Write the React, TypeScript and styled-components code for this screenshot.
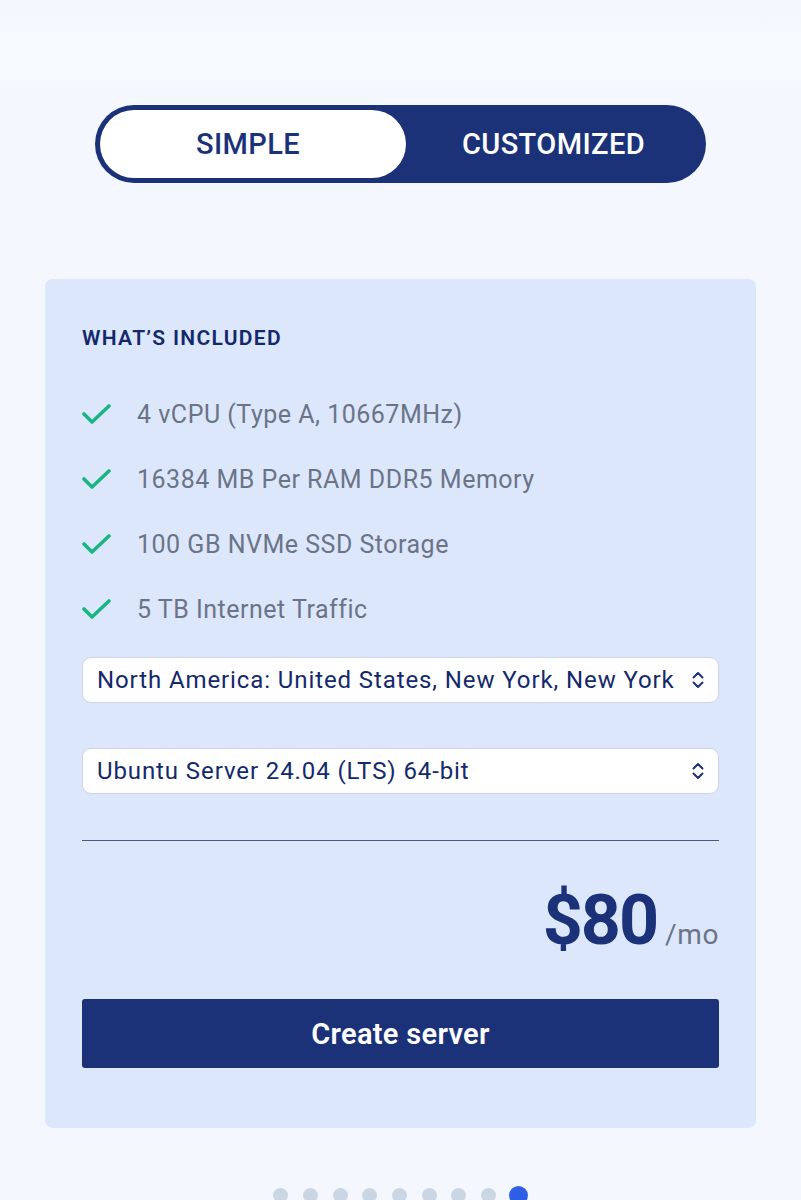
import React from 'react';
import styled, {createGlobalStyle} from 'styled-components';

const Navy = '#1b3279';
const Green = '#1bb583';

const GlobalStyle = createGlobalStyle`
    html, body {
        margin: 0;
        padding: 0;
        background: #f4f8fe;
        font-family: Roboto, 'Liberation Sans', sans-serif;
    }
`;

const features = [
    '4 vCPU (Type A, 10667MHz)',
    '16384 MB Per RAM DDR5 Memory',
    '100 GB NVMe SSD Storage',
    '5 TB Internet Traffic'
];

const Check = () => (
    <svg width='30' height='22' viewBox='0 0 30 22' fill='none'>
        <polyline points='2,11 10,19 27,3' stroke={Green} strokeWidth='3.6' strokeLinecap='round' strokeLinejoin='round' />
    </svg>
);

const UpDown = () => (
    <svg width='14' height='20' viewBox='0 0 14 20' fill='none'>
        <polyline points='2.5,7.5 7,3 11.5,7.5' stroke={Navy} strokeWidth='2' strokeLinecap='round' strokeLinejoin='round' />
        <polyline points='2.5,12.5 7,17 11.5,12.5' stroke={Navy} strokeWidth='2' strokeLinecap='round' strokeLinejoin='round' />
    </svg>
);

const App = () => (
    <Page>
        <GlobalStyle />
        <Toggle>
            <ToggleOption active>SIMPLE</ToggleOption>
            <ToggleOption>CUSTOMIZED</ToggleOption>
        </Toggle>

        <Card>
            <Heading>WHAT’S INCLUDED</Heading>
            <FeatureList>
                {features.map((f) => (
                    <Feature key={f}>
                        <Check />
                        <span>{f}</span>
                    </Feature>
                ))}
            </FeatureList>

            <Select>
                <span>North America: United States, New York, New York</span>
                <UpDown />
            </Select>
            <Select>
                <span>Ubuntu Server 24.04 (LTS) 64-bit</span>
                <UpDown />
            </Select>

            <Divider />

            <Price>
                <Amount>$80</Amount>
                <Period>/mo</Period>
            </Price>

            <CreateButton>Create server</CreateButton>
        </Card>

        <Dots>
            {Array.from({length: 9}).map((_, i) => (
                <Dot key={i} active={i === 8} />
            ))}
        </Dots>
    </Page>
);

export default App;

const Page = styled.main`
    display: flex;
    flex-direction: column;
    align-items: center;
    padding-top: 105px;
    min-height: 1200px;
    box-sizing: border-box;
    background: linear-gradient(#f3f7fd 0, #f7faff 50px, #f4f8fe 100px);
`;

const Toggle = styled.div`
    display: grid;
    grid-template-columns: 306px 1fr;
    width: 611px;
    height: 78px;
    box-sizing: border-box;
    padding: 5px;
    border-radius: 39px;
    background: ${Navy};
`;

const ToggleOption = styled.div<{active?: boolean}>`
    display: flex;
    align-items: center;
    justify-content: center;
    padding-right: ${({active}) => (active ? 10 : 0)}px;
    border-radius: 34px;
    font-size: 29px;
    font-weight: 500;
    letter-spacing: 0.4px;
    color: ${({active}) => (active ? Navy : '#ffffff')};
    background: ${({active}) => (active ? '#ffffff' : 'transparent')};
`;

const Card = styled.section`
    display: flex;
    flex-direction: column;
    width: 711px;
    box-sizing: border-box;
    margin-top: 96px;
    padding: 47px 37px 60px;
    border-radius: 8px;
    background: #dce7fc;
`;

const Heading = styled.h2`
    margin: 0;
    font-size: 21px;
    line-height: 25px;
    font-weight: 600;
    letter-spacing: 1.3px;
    color: #14296b;
`;

const FeatureList = styled.ul`
    display: flex;
    flex-direction: column;
    gap: 37px;
    margin: 0;
    padding: 0;
    margin-top: 49px;
    list-style: none;
`;

const Feature = styled.li`
    display: flex;
    align-items: center;
    gap: 25px;
    height: 28px;
    font-size: 25px;
    letter-spacing: 0.5px;
    color: #6b7487;
`;

const Select = styled.div`
    display: flex;
    align-items: center;
    justify-content: space-between;
    height: 46px;
    box-sizing: border-box;
    margin-top: 34px;
    padding: 0 13px 0 14px;
    border: 1.5px solid #cfd6e3;
    border-radius: 9px;
    background: #ffffff;
    font-size: 24px;
    letter-spacing: 0.9px;
    color: #14296b;

    & + & {
        margin-top: 45px;
    }
`;

const Divider = styled.hr`
    margin: 46px 0 0;
    border: none;
    border-top: 1.5px solid #4a5a82;
`;

const Price = styled.div`
    display: flex;
    align-items: baseline;
    justify-content: flex-end;
    gap: 8px;
    margin-top: 37px;
`;

const Amount = styled.span`
    font-size: 70px;
    line-height: 84px;
    font-weight: 700;
    letter-spacing: -2px;
    color: ${Navy};
`;

const Period = styled.span`
    font-size: 28px;
    letter-spacing: 0.6px;
    color: #6b7487;
`;

const CreateButton = styled.button`
    height: 69px;
    margin-top: 37px;
    border: none;
    border-radius: 3px;
    background: ${Navy};
    color: #ffffff;
    font-family: inherit;
    font-size: 29px;
    font-weight: 600;
    letter-spacing: 0.3px;
`;

const Dots = styled.div`
    display: flex;
    align-items: center;
    gap: 14.7px;
    margin-top: 58px;
`;

const Dot = styled.span<{active?: boolean}>`
    width: ${({active}) => (active ? 19 : 15)}px;
    height: ${({active}) => (active ? 19 : 15)}px;
    margin-left: ${({active}) => (active ? -2 : 0)}px;
    border-radius: 50%;
    background: ${({active}) => (active ? '#2d5fe6' : '#cbd6e4')};
`;
